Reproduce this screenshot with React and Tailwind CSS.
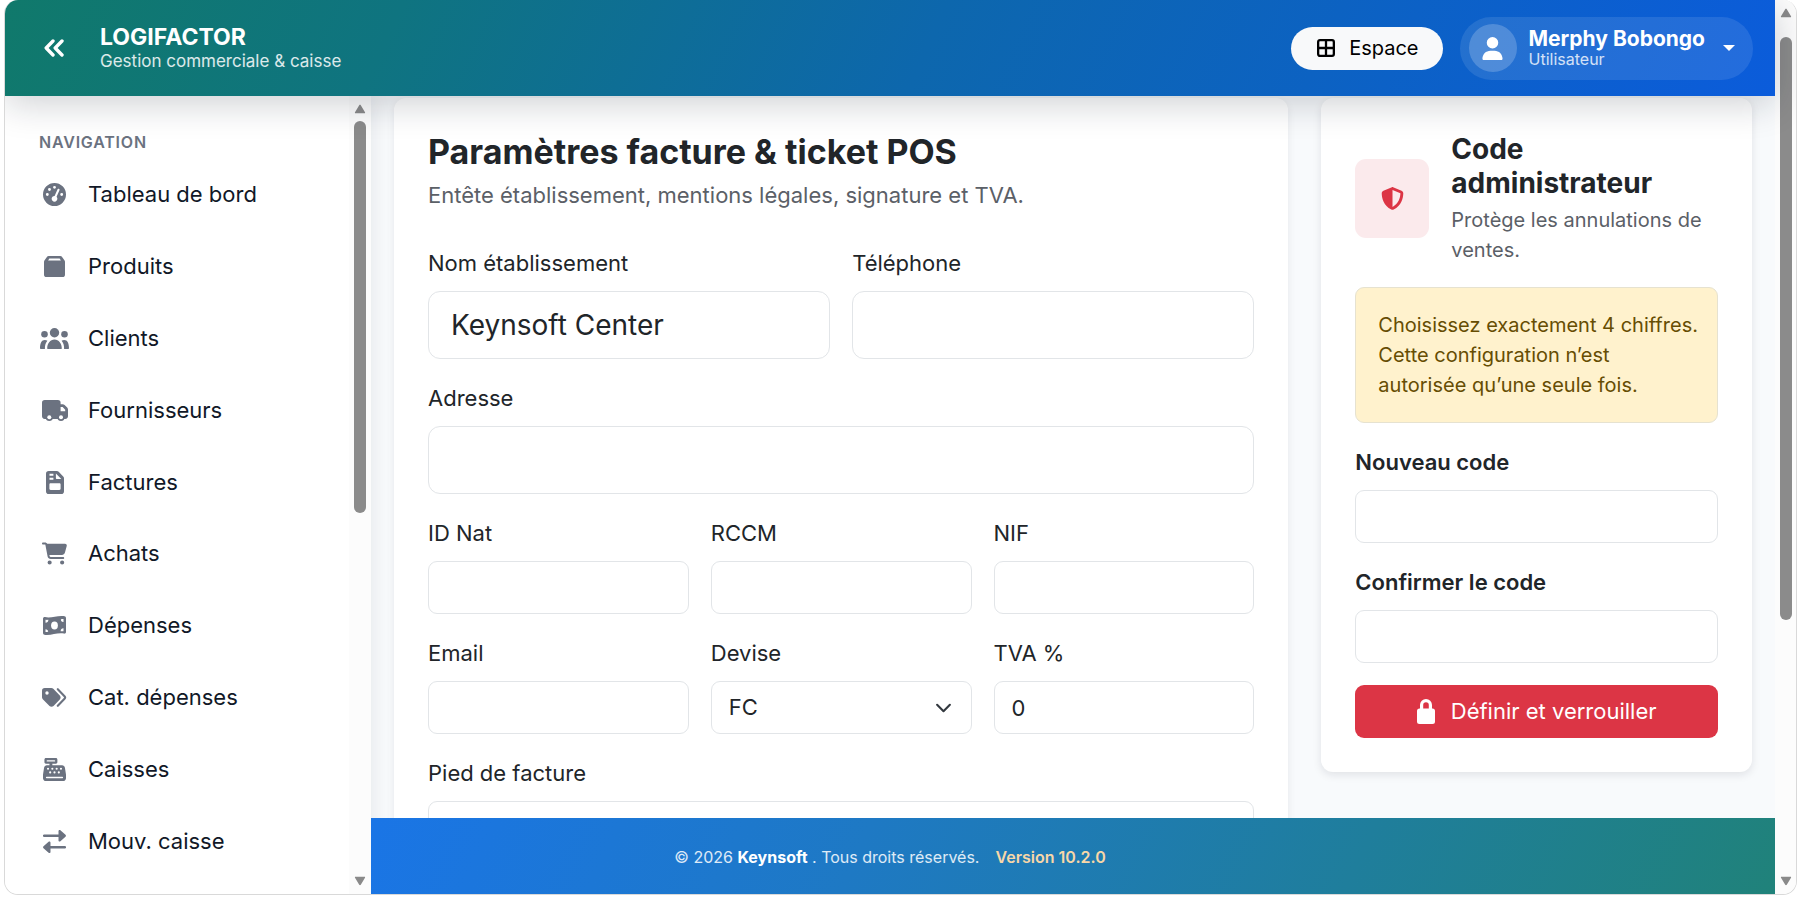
import React from "react";
import {
  FaGaugeHigh,
  FaCartShopping,
  FaCashRegister,
  FaUser,
  FaShieldHalved,
} from "react-icons/fa6";

function BoxIcon() {
  return (
    <svg viewBox="0 0 20 20" className="h-[21px] w-[21px]" fill="currentColor" aria-hidden="true">
      <path
        fillRule="evenodd"
        d="M4.600 0h10.800c.9 0 1.600.4 2 1.100L19.600 4.400c.3.400.4.800.4 1.300V17.500A2.500 2.500 0 0 1 17.500 20h-15A2.500 2.500 0 0 1 0 17.500V5.700c0-.5.1-.9.4-1.300L2.600 1.100C3 .4 3.700 0 4.600 0zM5.100 2.300 3.900 4.300h12.200L14.900 2.300z"
      />
    </svg>
  );
}

function UsersIcon() {
  return (
    <svg viewBox="0 0 29 21" className="h-[21px] w-[29px]" fill="currentColor" aria-hidden="true">
      <circle cx="14.500" cy="4.700" r="4.700" />
      <circle cx="4.500" cy="6.300" r="3.300" />
      <circle cx="24.500" cy="6.300" r="3.300" />
      <path d="M7.200 20.500c-.1-5 3-9 7.300-9s7.400 4 7.300 9c0 .3-.2.500-.5.500H7.700c-.3 0-.5-.2-.5-.5z" />
      <path d="M0 20.300c0-5 1.500-8.300 4.800-8.300 1 0 1.900.2 2.600.7-1.800 2-2.600 4.800-2.500 8.300H.7c-.4 0-.7-.3-.7-.7z" />
      <path d="M29 20.300c0-5-1.500-8.300-4.800-8.300-1 0-1.900.2-2.600.7 1.800 2 2.600 4.800 2.500 8.300h4.200c.4 0 .7-.3.7-.7z" />
    </svg>
  );
}

function TruckIcon() {
  return (
    <svg viewBox="0 0 26 21" className="h-[21px] w-[26px]" aria-hidden="true">
      <path
        fill="currentColor"
        fillRule="evenodd"
        d="M2.800 0h13a2.800 2.800 0 0 1 2.800 2.800v1.400h2c.8 0 1.500.3 2 .8l2.600 2.600c.5.500.8 1.200.8 2v6.500a2.800 2.800 0 0 1-2.800 2.800H2.800A2.800 2.800 0 0 1 0 16.100V2.800A2.800 2.800 0 0 1 2.800 0zm15.800 7v4.200h4.600V9.700L20.600 7z"
      />
      <circle cx="7.300" cy="17.300" r="3.700" fill="currentColor" />
      <circle cx="19" cy="17.300" r="3.700" fill="currentColor" />
      <circle cx="7.300" cy="17.300" r="2" fill="white" />
      <circle cx="19" cy="17.300" r="2" fill="white" />
    </svg>
  );
}

function InvoiceIcon() {
  return (
    <svg viewBox="0 0 18 23" className="h-[23px] w-[18px]" fill="currentColor" aria-hidden="true">
      <path
        fillRule="evenodd"
        d="M2.800 0h8c.8 0 1.400.3 1.900.8l4.500 4.600c.5.500.8 1.200.8 1.900v12.900a2.800 2.800 0 0 1-2.800 2.800H2.800A2.800 2.800 0 0 1 0 20.200V2.800A2.800 2.800 0 0 1 2.800 0zM3.500 2.700v2h3.900v-2zM3.500 6.700v2h3.900v-2zM9.900 2.500V7c0 .6.4 1 1 1h4.400zM4.600 12.200c-.7 0-1.200.5-1.200 1.200v4.300c0 .7.500 1.200 1.200 1.200h8.800c.7 0 1.200-.5 1.200-1.200v-4.300c0-.7-.5-1.200-1.200-1.200z"
      />
    </svg>
  );
}

function MoneyIcon() {
  return (
    <svg viewBox="0 0 23 19" className="h-[19px] w-[23px]" aria-hidden="true">
      <path
        fill="currentColor"
        d="M0 2.700C0 1.600 1 .9 2 1.100c6.500 1.200 11.500-1.600 18.500-1 1.500.1 2.500.8 2.500 2v13.800c0 1.200-1 1.900-2 1.700-6.500-1.200-11.500 1.700-18.500 1.300C1 18.800 0 18.100 0 16.900z"
      />
      <ellipse cx="11.500" cy="9.500" rx="3.400" ry="4.100" fill="white" />
      <path fill="white" d="M2.500 3.800c1 .1 2 .1 2.900 0A3 3 0 0 1 2.500 6.700zM20.500 3v2.900a2.500 2.500 0 0 1-2.600-2.600c.9-.2 1.700-.3 2.600-.3zM2.500 13.200c1.500 0 2.700 1.200 2.700 2.600-.9.200-1.800.3-2.700.3zM20.500 12.300v2.900c-1-.1-2-.1-2.900 0a3 3 0 0 1 2.900-2.900z" />
    </svg>
  );
}

function TagsIcon() {
  return (
    <svg viewBox="0 0 25 19" className="h-[19px] w-[25px]" aria-hidden="true">
      <path
        fill="currentColor"
        fillRule="evenodd"
        d="M0 2.800A2.800 2.800 0 0 1 2.800 0h6.500c.8 0 1.500.3 2 .8l6.500 6.600c1.100 1.100 1.100 2.900 0 4l-6.300 6.600c-1.100 1.100-2.900 1.100-4 0L.8 11.300C.3 10.800 0 10.100 0 9.300zM5 3.300a1.700 1.700 0 1 0 0 3.400 1.700 1.700 0 0 0 0-3.400z"
      />
      <path d="M15.800 1.200l6.700 7c.8.800.8 1.700 0 2.500l-6.700 7.100" fill="none" stroke="currentColor" strokeWidth="2.100" strokeLinecap="round" />
    </svg>
  );
}

function ExchangeIcon() {
  return (
    <svg viewBox="0 0 23 23" className="h-[23px] w-[23px]" fill="currentColor" aria-hidden="true">
      <path d="M1.100 4.600H15.500V1.200c0-1 1.100-1.500 1.900-.9l5.100 4.500c.6.500.6 1.400 0 1.900l-5.100 4.600c-.8.700-1.900.1-1.900-.9V6.900H1.100a1.150 1.150 0 0 1 0-2.300z" />
      <path d="M21.900 16.100H7.500v-3.400c0-1-1.100-1.500-1.900-.9L.5 16.300c-.6.500-.6 1.400 0 1.900l5.100 4.600c.8.700 1.900.1 1.900-.9v-3.500h14.400a1.150 1.150 0 0 0 0-2.300z" />
    </svg>
  );
}

const NAV = [
  { label: "Tableau de bord", icon: <FaGaugeHigh size={23} /> },
  { label: "Produits", icon: <BoxIcon /> },
  { label: "Clients", icon: <UsersIcon /> },
  { label: "Fournisseurs", icon: <TruckIcon /> },
  { label: "Factures", icon: <InvoiceIcon /> },
  { label: "Achats", icon: <FaCartShopping size={25} /> },
  { label: "Dépenses", icon: <MoneyIcon /> },
  { label: "Cat. dépenses", icon: <TagsIcon /> },
  { label: "Caisses", icon: <FaCashRegister size={23} /> },
  { label: "Mouv. caisse", icon: <ExchangeIcon /> },
];

function Triangle({ down }) {
  return (
    <svg viewBox="0 0 12 10" className={down ? "h-[10px] w-3 rotate-180" : "h-[10px] w-3"} aria-hidden="true">
      <path d="M5.200 1.200 1 8.200c-.3.600 0 1 .6 1h8.800c.6 0 .9-.4.600-1l-4.200-7c-.4-.6-1.200-.6-1.600 0z" fill="#8a8a8a" />
    </svg>
  );
}

function ScrollTrack({ className, thumb }) {
  return (
    <div aria-hidden="true" className={`flex shrink-0 flex-col items-center bg-[#fcfcfc] ${className}`}>
      <Triangle />
      <div className="flex min-h-0 w-3 flex-1 flex-col">
        <div className={`w-3 rounded-full bg-[#8b8b8b] ${thumb}`} />
      </div>
      <Triangle down />
    </div>
  );
}

function Field({ id, label, large, bold, className = "", type = "text", defaultValue, children }) {
  return (
    <div className={`flex flex-col gap-[11px] ${className}`}>
      <label htmlFor={id} className={`text-[22px] leading-[34px] ${bold ? "font-semibold" : ""}`}>
        {label}
      </label>
      {children || (
        <input
          id={id}
          type={type}
          defaultValue={defaultValue}
          className={
            large
              ? "h-[68px] w-full rounded-xl border border-[#e2e5e8] bg-white px-[22px] text-[28px] outline-none"
              : "h-[53px] w-full rounded-[9px] border border-[#e2e5e8] bg-white px-[17px] text-[22px] outline-none"
          }
        />
      )}
    </div>
  );
}

function Header() {
  return (
    <header className="relative z-20 flex h-24 shrink-0 items-center bg-[linear-gradient(115deg,#10796b_0%,#0f7480_22%,#0d67ad_52%,#0b5cdb_100%)] pr-[22px] pl-[31px] text-white shadow-[0_8px_36px_rgba(15,23,42,0.2)]">
      <button type="button" aria-label="Réduire le menu" className="flex h-12 w-12 items-center">
        <svg viewBox="0 0 20 18" className="ml-2 h-[18px] w-5" fill="none" stroke="currentColor" strokeWidth="3.400" strokeLinecap="round" strokeLinejoin="round" aria-hidden="true">
          <path d="M9 2 2.200 9 9 16M18 2 11.200 9 18 16" />
        </svg>
      </button>
      <div className="ml-4 flex flex-1 flex-col">
        <span className="text-[23px] leading-[26px] font-bold">LOGIFACTOR</span>
        <span className="text-[17px] leading-[22px] text-white/85">Gestion commerciale &amp; caisse</span>
      </div>
      <div className="flex items-center gap-[17px]">
        <button type="button" className="flex h-[43px] items-center gap-[14px] rounded-full bg-[#f8f9fa] pr-6 pl-[26px] text-[20px] text-black">
          <svg viewBox="0 0 18 18" className="h-[18px] w-[18px]" fill="none" stroke="currentColor" strokeWidth="2.300" aria-hidden="true">
            <rect x="1.150" y="1.150" width="15.700" height="15.700" rx="1.800" />
            <path d="M9 1v16M1 9h16" />
          </svg>
          Espace
        </button>
        <button type="button" className="flex h-[63px] items-center rounded-full bg-white/10 pr-[18px] pl-[9px] text-left">
          <span className="flex h-12 w-12 items-center justify-center rounded-full bg-white/20">
            <FaUser size={23} />
          </span>
          <span className="ml-3 flex flex-col">
            <span className="text-[21px] leading-[22px] font-bold">Merphy Bobongo</span>
            <span className="text-[16px] leading-[18px] text-white/80">Utilisateur</span>
          </span>
          <svg viewBox="0 0 12 6" className="ml-[18px] h-[6px] w-3" fill="currentColor" aria-hidden="true">
            <path d="M0 0h12L6 6z" />
          </svg>
        </button>
      </div>
    </header>
  );
}

function Sidebar() {
  return (
    <aside className="z-10 flex w-[366px] shrink-0 bg-white shadow-[2px_0_18px_rgba(15,23,42,0.08)]">
      <div className="flex min-w-0 flex-1 flex-col pt-[33px] pb-[17px] pl-[34px]">
        <h2 className="text-[16px] leading-[26px] font-semibold tracking-wider text-[#6b7280]">NAVIGATION</h2>
        <nav className="flex min-h-0 flex-1 flex-col pt-1">
          {NAV.map((item) => (
            <a key={item.label} href="#" className="flex flex-1 items-center gap-[18px] text-[22px] text-[#111827]">
              <span className="flex w-[31px] items-center justify-center text-[#6b7280]">{item.icon}</span>
              {item.label}
            </a>
          ))}
        </nav>
      </div>
      <ScrollTrack className="w-[22px] py-2" thumb="mt-[7px] h-[51.500%]" />
    </aside>
  );
}

function InvoiceForm() {
  return (
    <section className="col-span-2 rounded-xl bg-white p-[34px] shadow-[0_3px_8px_rgba(15,23,42,0.08)]">
      <h1 className="text-[34px] leading-10 font-bold">Paramètres facture &amp; ticket POS</h1>
      <p className="mt-[6px] text-[22px] leading-[34px] text-[#5b6067]">
        Entête établissement, mentions légales, signature et TVA.
      </p>
      <form className="mt-[34px] grid grid-cols-6 gap-[22px]">
        <Field id="nom" label="Nom établissement" large className="col-span-3" defaultValue="Keynsoft Center" />
        <Field id="telephone" label="Téléphone" large className="col-span-3" type="tel" />
        <Field id="adresse" label="Adresse" large className="col-span-6" />
        <Field id="idnat" label="ID Nat" className="col-span-2" />
        <Field id="rccm" label="RCCM" className="col-span-2" />
        <Field id="nif" label="NIF" className="col-span-2" />
        <Field id="email" label="Email" className="col-span-2" type="email" />
        <Field id="devise" label="Devise" className="col-span-2">
          <div className="relative">
            <select id="devise" defaultValue="FC" className="h-[53px] w-full appearance-none rounded-[9px] border border-[#e2e5e8] bg-white px-[17px] text-[22px] outline-none">
              <option>FC</option>
              <option>USD</option>
            </select>
            <svg viewBox="0 0 16 16" className="pointer-events-none absolute top-1/2 right-5 h-[17px] w-[17px] -translate-y-1/2" fill="none" stroke="#343a40" strokeWidth="2" strokeLinecap="round" strokeLinejoin="round" aria-hidden="true">
              <path d="m2 5 6 6 6-6" />
            </svg>
          </div>
        </Field>
        <Field id="tva" label="TVA %" className="col-span-2" defaultValue="0" />
        <Field id="pied" label="Pied de facture" className="col-span-6" />
      </form>
    </section>
  );
}

function AdminCode() {
  return (
    <section className="self-start rounded-xl bg-white p-[34px] shadow-[0_3px_8px_rgba(15,23,42,0.1)]">
      <div className="flex items-center gap-[22px]">
        <div className="flex h-[79px] w-[74px] shrink-0 items-center justify-center rounded-[11px] bg-[#fbeaec] text-[#dc3545]">
          <FaShieldHalved size={23} />
        </div>
        <div>
          <h2 className="text-[28px] leading-[34px] font-bold">Code administrateur</h2>
          <p className="mt-[5px] text-[20px] leading-[30px] text-[#5b6067]">Protège les annulations de ventes.</p>
        </div>
      </div>
      <p className="mt-[22px] rounded-[9px] border border-[#e6e2d0] bg-[#fff2cd] py-[22px] pr-4 pl-[22px] text-[20px] leading-[30px] text-[#664d03]">
        Choisissez exactement 4 chiffres. Cette configuration n’est autorisée qu’une seule fois.
      </p>
      <form className="mt-[22px] flex flex-col gap-[22px]">
        <Field id="code" label="Nouveau code" bold type="password" />
        <Field id="code2" label="Confirmer le code" bold type="password" />
        <button type="button" className="flex h-[53px] items-center justify-center gap-4 rounded-[9px] bg-[#dc3545] text-[22px] text-white">
          <svg viewBox="0 0 18 25" className="h-[25px] w-[18px]" fill="currentColor" aria-hidden="true">
            <path
              fillRule="evenodd"
              d="M3 9.500V6a6 6 0 0 1 12 0v3.500h.5A2.500 2.500 0 0 1 18 12v10.500a2.500 2.500 0 0 1-2.500 2.500h-13A2.500 2.500 0 0 1 0 22.500V12a2.500 2.500 0 0 1 2.500-2.500zM6.200 9.500h5.600V6a2.800 2.800 0 0 0-5.600 0z"
            />
          </svg>
          Définir et verrouiller
        </button>
      </form>
    </section>
  );
}

function Footer() {
  return (
    <footer className="z-10 flex h-[76px] shrink-0 items-center justify-center bg-[linear-gradient(115deg,#1a75e6_0%,#1e79c4_35%,#1f7e9c_70%,#20827a_100%)] pt-[2px] pr-[366px] text-[16px] text-white/85">
      <p>
        © 2026 <strong className="font-bold text-white">Keynsoft</strong> . Tous droits réservés.
        <span className="ml-4 font-semibold text-[#f8d7a8]">Version 10.2.0</span>
      </p>
    </footer>
  );
}

export default function App() {
  return (
    <div className="h-screen bg-white pr-[3px] pb-1 pl-1 font-['Inter',sans-serif] text-[#212529]">
      <div className="flex h-full overflow-hidden rounded-[14px] border border-t-0 border-[#d9d9d9]">
        <div className="flex min-w-0 flex-1 flex-col">
          <Header />
          <div className="flex min-h-0 flex-1">
            <Sidebar />
            <div className="flex min-w-0 flex-1 flex-col">
              <main className="grid min-h-0 flex-1 grid-cols-3 gap-[33px] overflow-hidden bg-[#f8fafc] px-[23px] pt-[2px]">
                <InvoiceForm />
                <AdminCode />
              </main>
              <Footer />
            </div>
          </div>
        </div>
        <ScrollTrack className="w-[21px] py-2" thumb="mt-[19px] h-[68%]" />
      </div>
    </div>
  );
}
